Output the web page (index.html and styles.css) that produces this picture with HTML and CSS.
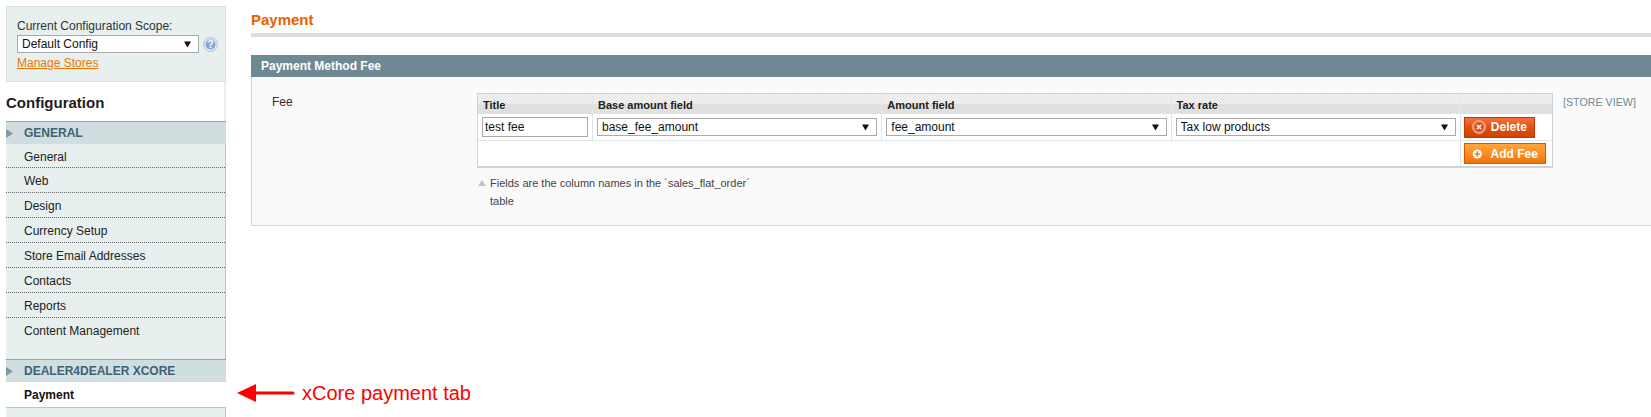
FILE: index.html
```html
<!DOCTYPE html>
<html lang="en">
<head>
<meta charset="utf-8">
<title>Payment</title>
<link rel="stylesheet" href="styles.css">
</head>
<body>
<div class="page">
  <aside class="side">
    <div class="scope">
      <label class="scope-label">Current Configuration Scope:</label>
      <div class="scope-row">
        <select class="sel scope-sel"><option>Default Config</option></select>
        <svg class="help" width="15" height="15" viewBox="0 0 15 15"><circle cx="7.5" cy="7.5" r="7" fill="#dbe7f4" stroke="#a9c3e2"/><circle cx="7.5" cy="7.5" r="5" fill="#86a8d2"/><text x="7.5" y="11" text-anchor="middle" class="help-q">?</text></svg>
      </div>
      <a class="manage">Manage Stores</a>
    </div>
    <h3 class="side-title">Configuration</h3>
    <div class="group-head"><svg class="tri" width="7" height="9" viewBox="0 0 7 9"><path d="M0 0L7 4.500L0 9Z"/></svg>GENERAL</div>
    <ul class="items">
      <li>General</li>
      <li>Web</li>
      <li>Design</li>
      <li>Currency Setup</li>
      <li>Store Email Addresses</li>
      <li>Contacts</li>
      <li>Reports</li>
      <li class="last">Content Management</li>
    </ul>
    <div class="group-head"><svg class="tri" width="7" height="9" viewBox="0 0 7 9"><path d="M0 0L7 4.500L0 9Z"/></svg>DEALER4DEALER XCORE</div>
    <div class="active">Payment</div>
    <div class="side-rest"></div>
  </aside>
  <main class="main">
    <h3 class="title">Payment</h3>
    <div class="sec-head">Payment Method Fee</div>
    <div class="sec-body">
      <div class="fee-label">Fee</div>
      <div class="fee-value">
        <table class="grid">
          <colgroup><col class="c1"><col class="c2"><col class="c2"><col class="c2"><col class="c5"></colgroup>
          <thead>
            <tr><th>Title</th><th>Base amount field</th><th>Amount field</th><th>Tax rate</th><th></th></tr>
          </thead>
          <tbody>
            <tr>
              <td><input class="inp" type="text" value="test fee"></td>
              <td><select class="sel cell-sel"><option>base_fee_amount</option></select></td>
              <td><select class="sel cell-sel"><option>fee_amount</option></select></td>
              <td><select class="sel cell-sel"><option>Tax low products</option></select></td>
              <td class="btn-cell"><button class="btn del"><svg width="16" height="16" viewBox="0 0 16 16"><circle cx="8" cy="8" r="7.300" fill="#ee8a63" stroke="#f9c9b3"/><circle cx="8" cy="8" r="5.200" fill="#d8431c"/><path d="M5.500 5.500L10.500 10.500M10.500 5.500L5.500 10.500" stroke="#fbe3d9" stroke-width="2.200"/></svg><span>Delete</span></button></td>
            </tr>
            <tr class="foot">
              <td colspan="4"></td>
              <td class="btn-cell"><button class="btn add"><svg width="14" height="14" viewBox="0 0 14 14"><circle cx="7" cy="7" r="6" fill="#fff"/><path d="M3.500 7H10.500M7 3.500V10.500" stroke="#f47d18" stroke-width="2.200"/></svg><span>Add Fee</span></button></td>
            </tr>
          </tbody>
        </table>
        <p class="note">Fields are the column names in the ´sales_flat_order´ table</p>
      </div>
      <div class="scope-tag">[STORE VIEW]</div>
    </div>
  </main>
</div>
<div class="callout">
  <svg width="58" height="18" viewBox="0 0 58 18"><path d="M0 9L19 0V7.500H56a1.500 1.500 0 0 1 0 3H19V18Z" fill="#f00"/></svg>
  <span>xCore payment tab</span>
</div>
</body>
</html>
```
FILE: styles.css
```css
html, body { margin: 0; padding: 0; height: 417px; overflow: hidden; background: #fff; }
body { font: 12px/16px "Liberation Sans", Arial, sans-serif; color: #2f2f2f; position: relative; }
.page { display: flex; align-items: flex-start; }

.side { width: 220px; margin: 6px 0 0 6px; flex: none; }
.scope { box-sizing: border-box; height: 76px; background: #e7efef; border: 1px solid #d6e2e2; padding: 11px 0 0 10px; }
.scope-label { display: block; line-height: 16px; color: #333; }
.scope-row { display: flex; align-items: center; gap: 4px; margin-top: 1px; }
.sel { box-sizing: border-box; appearance: none; -webkit-appearance: none; border: 1px solid #aaa; color: #111; font: 12px "Liberation Sans", Arial, sans-serif; border-radius: 0; padding: 0 16px 0 4px; margin: 0;
  background: #fff url("data:image/svg+xml,%3Csvg xmlns='http://www.w3.org/2000/svg' width='7' height='7'%3E%3Cpath d='M0 0.500H7L3.500 6.500Z' fill='%23111'/%3E%3C/svg%3E") no-repeat right 7px center; }
.scope-sel { width: 182px; height: 18px; flex: none; }
.help { flex: none; }
.help-q { font: bold 10px "Liberation Sans", Arial, sans-serif; fill: #fff; }
.manage { display: block; margin-top: 2px; color: #ea7601; text-decoration: underline; line-height: 16px; }

.side-title { box-sizing: border-box; height: 39px; margin: 0; font: bold 15px/41px "Liberation Sans", Arial, sans-serif; color: #1d1d1d; border-right: 2px solid #e7efef; }
.group-head { box-sizing: border-box; height: 23px; background: #d1dedf; border-top: 1px solid #8ea4a9; color: #3d6375; font-weight: bold; line-height: 21px; display: flex; align-items: center; }
.tri { fill: #7e9ba5; margin-right: 11px; flex: none; }
.items { list-style: none; margin: 0; padding: 0 0 18px; background: #e7efef; border-right: 1px solid #b7c4c6; }
.items li { box-sizing: border-box; height: 25px; padding: 3px 0 0 18px; line-height: 21px; color: #222; border-bottom: 1px dotted #666; }
.items li:first-child { height: 24px; }
.items li.last { border-bottom: 0; height: 23px; }
.active { box-sizing: border-box; height: 26px; padding-left: 18px; font-weight: bold; line-height: 26px; color: #111; border-bottom: 1px solid #b9c6c8; }
.side-rest { height: 12px; background: #e7efef; border-right: 1px solid #b7c4c6; }

.main { flex: 1; min-width: 0; margin: 0 -2px 0 25px; }
.title { box-sizing: border-box; height: 37px; margin: 0; padding-top: 11px; border-bottom: 4px solid #ddd; font: bold 15px/17px "Liberation Sans", Arial, sans-serif; color: #eb5e00; }
.sec-head { box-sizing: border-box; height: 22px; margin-top: 18px; padding-left: 10px; background: #6f8992; color: #fff; font-weight: bold; line-height: 22px; }
.sec-body { box-sizing: border-box; height: 149px; display: flex; background: #fafafa; border: 1px solid #d6d6d6; border-top: 0; padding-top: 16px; }
.fee-label { width: 225px; padding-left: 20px; box-sizing: border-box; line-height: 18px; flex: none; }
.fee-value { width: 1074px; flex: none; }
.scope-tag { margin-left: 12px; color: #6f8992; font-size: 10.700px; line-height: 18px; }

.grid { table-layout: fixed; width: 1074px; border-collapse: separate; border-spacing: 0; border: 1px solid #cdd6d6; border-bottom-width: 2px; background: #fff; }
.c1 { width: 115px; }
.c2 { width: 289.300px; }
.c5 { width: 91px; }
.grid th { box-sizing: border-box; height: 20px; padding: 2px 0 0 5px; text-align: left; font-size: 11px; line-height: 16px; color: #222; border-right: 1px solid #e2e8e8;
  background: linear-gradient(#0000 10px, #e0e0e0 10px), #f3f3f3 url("data:image/svg+xml,%3Csvg xmlns='http://www.w3.org/2000/svg' width='3' height='3' shape-rendering='crispEdges'%3E%3Cpath d='M2 0h1v1h-1zM1 1h1v1h-1zM0 2h1v1h-1z' fill='%23e0e0e0'/%3E%3C/svg%3E"); }
.grid th:last-child { border-right: 0; }
.grid td { box-sizing: border-box; height: 27px; padding: 0 4px; border-right: 1px solid #dfe6e6; border-bottom: 1px solid #dfe6e6; vertical-align: middle; }
.grid td:last-child { border-right: 0; }
.grid .foot td { height: 25px; border-bottom: 0; }
.inp { box-sizing: border-box; width: 106px; height: 20px; display: block; border: 1px solid #aaa; padding: 0 2px; margin: 0; color: #111; font: 12px "Liberation Sans", Arial, sans-serif; }
.cell-sel { display: block; width: 100%; height: 18px; }
.btn-cell { padding: 0 3px !important; }
.btn { display: flex; align-items: center; box-sizing: border-box; height: 21px; padding: 0 7px; border-width: 1px; border-style: solid; color: #fff; font: bold 12px/16px "Liberation Sans", Arial, sans-serif; margin: 0; white-space: nowrap; }
.btn span { margin-left: 5px; }
.del { width: 71px; background: linear-gradient(#f8703a, #df4e0d 55%, #cf4300); border-color: #bd3a00; }
.add { width: 82px; background: linear-gradient(#ffa63e, #fa8b22 55%, #f17408); border-color: #d35a08; }
.add span { margin-left: 8px; }
.note { margin: 6px 0 0; width: 270px; padding-left: 13px; line-height: 18px; font-size: 11px; color: #444; position: relative; }
.note::before { content: ""; position: absolute; left: 1px; top: 6px; border: 4px solid transparent; border-top: 0; border-bottom: 6px solid #b9c6c8; }

.callout { position: absolute; left: 237px; top: 381px; display: flex; align-items: center; gap: 7px; color: #f00; font-size: 20px; line-height: 24px; }
```
